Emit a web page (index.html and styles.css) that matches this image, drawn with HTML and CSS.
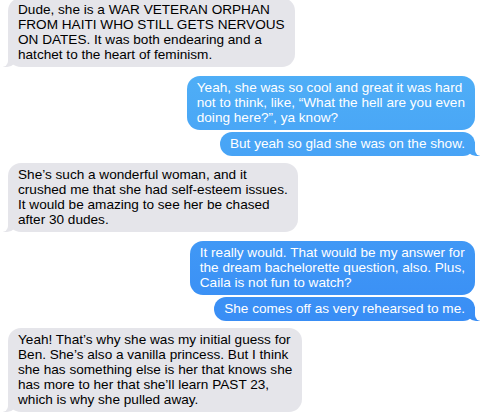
FILE: index.html
```html
<!DOCTYPE html>
<html>
<head>
    <title>Messages</title>
    <link rel="stylesheet" href="styles.css">
</head>
<body>
    <div class="chat">
        <div class="msg them tail">Dude, she is a WAR VETERAN ORPHAN<br>FROM HAITI WHO STILL GETS NERVOUS<br>ON DATES. It was both endearing and a<br>hatchet to the heart of feminism.</div>

        <div class="msg me">Yeah, she was so cool and great it was hard<br>not to think, like, “What the hell are you even<br>doing here?”, ya know?</div>
        <div class="msg me tail">But yeah so glad she was on the show.</div>

        <div class="msg them tail">She’s such a wonderful woman, and it<br>crushed me that she had self-esteem issues.<br>It would be amazing to see her be chased<br>after 30 dudes.</div>

        <div class="msg me">It really would. That would be my answer for<br>the dream bachelorette question, also. Plus,<br>Caila is not fun to watch?</div>
        <div class="msg me tail">She comes off as very rehearsed to me.</div>

        <div class="msg them tail">Yeah! That’s why she was my initial guess for<br>Ben. She’s also a vanilla princess. But I think<br>she has something else is her that knows she<br>has more to her that she’ll learn PAST 23,<br>which is why she pulled away.</div>
    </div>
</body>
</html>
```

FILE: styles.css
```css
body {
    margin: 0;
    background: #fff;
    font-family: 'Helvetica Neue', 'Liberation Sans', Arial, sans-serif;
    font-size: 13.6px;
    line-height: 15px;
}
.chat {
    display: flex;
    flex-direction: column;
    padding: 0 13px 0 8px;
    margin-top: -2px;
}
.msg {
    position: relative;
    padding: 4px 10px 5px;
    border-radius: 13px;
    white-space: nowrap;
}
.them {
    align-self: flex-start;
    background: #e5e5ea;
    color: #000;
    margin-bottom: 9px;
}
.me {
    align-self: flex-end;
    color: #fff;
    background: linear-gradient(#55b8f7, #3a8ff5 75%, #2f7ff4) fixed;
    margin-bottom: 2px;
}
.me.tail {
    margin-bottom: 7px;
}

/* bubble tails */
.tail::before,
.tail::after {
    content: "";
    position: absolute;
    bottom: 0;
    height: 14px;
}
.them.tail::before {
    left: -5px;
    width: 14px;
    background: #e5e5ea;
    border-bottom-right-radius: 10px;
}
.them.tail::after {
    left: -8px;
    width: 8px;
    background: #fff;
    border-bottom-right-radius: 6px;
}
.me.tail::before {
    right: -5px;
    width: 14px;
    background: linear-gradient(#55b8f7, #3a8ff5 75%, #2f7ff4) fixed;
    border-bottom-left-radius: 10px;
}
.me.tail::after {
    right: -8px;
    width: 8px;
    background: #fff;
    border-bottom-left-radius: 6px;
}
```
